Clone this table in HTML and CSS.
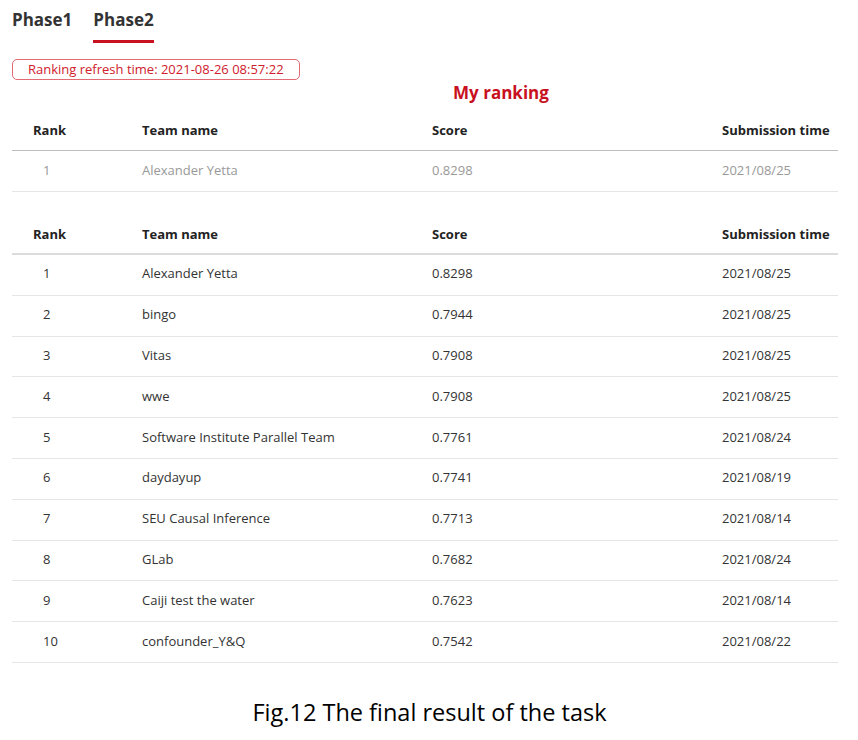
FILE: index.html
```html
<!DOCTYPE html>
<html lang="en">
<head>
<meta charset="utf-8">
<title>Ranking</title>
<link rel="stylesheet" href="styles.css">
</head>
<body>
<div class="page">
  <nav class="tabs">
    <div class="tab">Phase1</div>
    <div class="tab active">Phase2</div>
  </nav>
  <div class="refresh">Ranking refresh time: 2021-08-26 08:57:22</div>
  <h2 class="my-title">My ranking</h2>
  <div class="table mine">
    <div class="row head">
      <div class="c rank">Rank</div><div class="c">Team name</div><div class="c">Score</div><div class="c">Submission time</div>
    </div>
    <div class="row">
      <div class="c rank">1</div><div class="c">Alexander Yetta</div><div class="c">0.8298</div><div class="c">2021/08/25</div>
    </div>
  </div>
  <div class="table all">
    <div class="row head">
      <div class="c rank">Rank</div><div class="c">Team name</div><div class="c">Score</div><div class="c">Submission time</div>
    </div>
    <div class="row"><div class="c rank">1</div><div class="c">Alexander Yetta</div><div class="c">0.8298</div><div class="c">2021/08/25</div></div>
    <div class="row"><div class="c rank">2</div><div class="c">bingo</div><div class="c">0.7944</div><div class="c">2021/08/25</div></div>
    <div class="row"><div class="c rank">3</div><div class="c">Vitas</div><div class="c">0.7908</div><div class="c">2021/08/25</div></div>
    <div class="row"><div class="c rank">4</div><div class="c">wwe</div><div class="c">0.7908</div><div class="c">2021/08/25</div></div>
    <div class="row"><div class="c rank">5</div><div class="c">Software Institute Parallel Team</div><div class="c">0.7761</div><div class="c">2021/08/24</div></div>
    <div class="row"><div class="c rank">6</div><div class="c">daydayup</div><div class="c">0.7741</div><div class="c">2021/08/19</div></div>
    <div class="row"><div class="c rank">7</div><div class="c">SEU Causal Inference</div><div class="c">0.7713</div><div class="c">2021/08/14</div></div>
    <div class="row"><div class="c rank">8</div><div class="c">GLab</div><div class="c">0.7682</div><div class="c">2021/08/24</div></div>
    <div class="row"><div class="c rank">9</div><div class="c">Caiji test the water</div><div class="c">0.7623</div><div class="c">2021/08/14</div></div>
    <div class="row"><div class="c rank">10</div><div class="c">confounder_Y&amp;Q</div><div class="c">0.7542</div><div class="c">2021/08/22</div></div>
  </div>
  <p class="caption">Fig.12 The final result of the task</p>
</div>
</body>
</html>
```
FILE: styles.css
```css
html, body {
  margin: 0;
  padding: 0;
  background: #fff;
}
.page {
  padding: 0 20px 0 12px;
  font-family: "Open Sans", "Noto Sans", sans-serif;
  color: #333;
}
.tabs {
  display: flex;
  gap: 21px;
  height: 43px;
}
.tab {
  font-size: 17px;
  font-weight: 700;
  color: #333;
  padding-top: 8px;
  box-sizing: border-box;
  height: 43px;
}
.tab.active {
  border-bottom: 3px solid #c8101e;
}
.refresh {
  display: inline-block;
  margin-top: 16px;
  height: 21px;
  box-sizing: border-box;
  padding: 0 15px;
  border: 1px solid #e26a72;
  border-radius: 5px;
  color: #d0202c;
  font-size: 13px;
  line-height: 19px;
}
.my-title {
  margin: 0 0 5px;
  text-align: center;
  padding-left: 152px;
  color: #c8101e;
  font-size: 17px;
  font-weight: 700;
  line-height: 26px;
}
.table {
  display: flex;
  flex-direction: column;
}
.row {
  display: grid;
  grid-template-columns: 130px 290px 290px 1fr;
  height: 40.8px;
  padding-bottom: 3px;
  align-items: center;
  font-size: 13px;
  border-bottom: 1px solid #e6e6e6;
  box-sizing: border-box;
}
.row.head {
  font-weight: 700;
  color: #222;
  height: 40px;
  padding-bottom: 1px;
}
.c.rank {
  padding-left: 31px;
}
.row.head .c.rank {
  padding-left: 21px;
}
.mine .row.head {
  border-bottom: 1px solid #bdbdbd;
}
.mine .row:not(.head) {
  color: #999;
  height: 41px;
}
.all {
  margin-top: 23px;
}
.all .row.head {
  border-bottom: 2px solid #dcdcdc;
}
.caption {
  margin: 33px 0 0;
  text-align: center;
  font-size: 23.5px;
  color: #000;
  padding-left: 9px;
}
```
